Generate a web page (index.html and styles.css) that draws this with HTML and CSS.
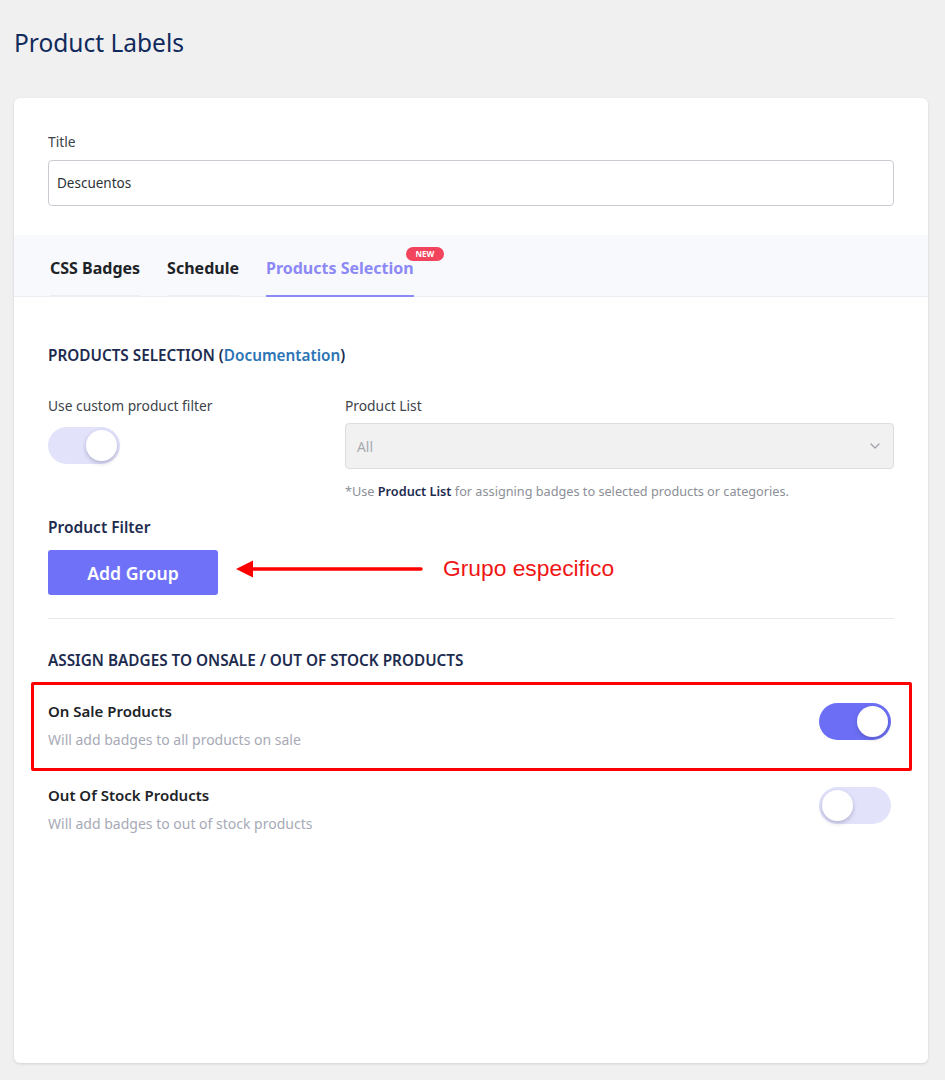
FILE: index.html
```html
<!DOCTYPE html>
<html lang="en">
<head>
    <meta charset="UTF-8">
    <title>Product Labels</title>
    <link rel="stylesheet" href="styles.css">
</head>
<body>
<h1 class="page-title">Product Labels</h1>

<!-- main settings card -->
<div class="card">
    <div class="title-field">
        <label class="field-label">Title</label>
        <div class="text-input">Descuentos</div>
    </div>

    <!-- tabs -->
    <div class="tabs">
        <a class="tab" href="javascript:;">CSS Badges</a>
        <a class="tab" href="javascript:;">Schedule</a>
        <a class="tab active" href="javascript:;">Products Selection<span class="new-badge">NEW</span></a>
    </div>

    <div class="panel">
        <h2 class="section-title">PRODUCTS SELECTION (<a href="javascript:;">Documentation</a>)</h2>

        <div class="filter-row">
            <div class="filter-col">
                <label class="field-label">Use custom product filter</label>
                <span class="switch switch-soft on"><span class="knob"></span></span>
            </div>
            <div class="filter-col">
                <label class="field-label">Product List</label>
                <div class="select-box">
                    <span>All</span>
                    <svg width="10" height="6" viewBox="0 0 10 6"><path d="M1 1l4 4 4-4" fill="none" stroke="#a0a3ab" stroke-width="1.3" stroke-linecap="round" stroke-linejoin="round"/></svg>
                </div>
                <p class="hint">*Use <b>Product List</b> for assigning badges to selected products or categories.</p>
            </div>
        </div>

        <h3 class="sub-title">Product Filter</h3>
        <div class="group-row">
            <button class="btn-primary">Add Group</button>
            <!-- annotation arrow -->
            <svg class="note-arrow" width="188" height="20" viewBox="0 0 188 20">
                <path d="M0 10L17 1.5V18.5Z" fill="#ff0000"/>
                <path d="M15 10H185" stroke="#ff0000" stroke-width="3.5" stroke-linecap="round"/>
            </svg>
            <span class="note-text">Grupo especifico</span>
        </div>

        <div class="divider"></div>

        <h2 class="section-title assign">ASSIGN BADGES TO ONSALE / OUT OF STOCK PRODUCTS</h2>

        <div class="option marked">
            <div class="option-text">
                <div class="option-name">On Sale Products</div>
                <div class="option-desc">Will add badges to all products on sale</div>
            </div>
            <span class="switch on"><span class="knob"></span></span>
        </div>

        <div class="option">
            <div class="option-text">
                <div class="option-name">Out Of Stock Products</div>
                <div class="option-desc">Will add badges to out of stock products</div>
            </div>
            <span class="switch switch-soft"><span class="knob"></span></span>
        </div>
    </div>
</div>
</body>
</html>
```

FILE: styles.css
```css
* {
    margin: 0;
    padding: 0;
    box-sizing: border-box;
}

body {
    background-color: #f0f0f0;
    font-family: "Noto Sans", "Open Sans", sans-serif;
    color: #1d2327;
}

.page-title {
    padding: 28px 14px 0;
    font-size: 24.5px;
    line-height: 30px;
    font-weight: 400;
    color: #102a5c;
}

/* card */
.card {
    margin: 40px 17px 17px 14px;
    height: 965px;
    background-color: #fff;
    border-radius: 6px;
    box-shadow: 0 1px 3px rgba(0, 0, 0, 0.12);
    padding-top: 35px;
}

.title-field {
    padding: 0 34px;
}

.field-label {
    display: block;
    font-size: 13.8px;
    line-height: 18px;
    color: #3c434a;
}

.text-input {
    margin-top: 9px;
    height: 46px;
    border: 1px solid #c9cbd2;
    border-radius: 4px;
    padding: 0 8px;
    font-size: 13.5px;
    line-height: 44px;
    color: #2c3338;
}

/* tabs */
.tabs {
    margin-top: 29px;
    display: flex;
    gap: 27px;
    padding: 0 36px;
    background-color: #f8f9fd;
    border-bottom: 1px solid #ebecf1;
}

.tab {
    position: relative;
    padding: 23px 0 17px;
    font-size: 16px;
    line-height: 20px;
    font-weight: 700;
    color: #1d2327;
    text-decoration: none;
    border-bottom: 2px solid #eceef4;
    margin-bottom: -1px;
}

.tab.active {
    color: #8c88f6;
    border-bottom-color: #8c88f6;
}

.new-badge {
    position: absolute;
    left: 140px;
    top: 12px;
    width: 38px;
    text-align: center;
    height: 14px;
    border-radius: 7px;
    background-color: #f2445c;
    color: #fff;
    font-size: 8px;
    line-height: 14px;
    font-weight: 700;
}

/* panel */
.panel {
    padding: 0 34px;
}

.section-title {
    margin-top: 48px;
    font-size: 15.3px;
    line-height: 20px;
    font-weight: 600;
    color: #1d2b4f;
}

.section-title a {
    color: #2b74b5;
    text-decoration: none;
}

.filter-row {
    margin-top: 32px;
    display: grid;
    grid-template-columns: 297px 1fr;
}

.switch {
    display: block;
    position: relative;
    width: 72px;
    height: 37px;
    border-radius: 19px;
    background-color: #6c6ff5;
}

.switch-soft {
    background-color: #e2e2fb;
}

.knob {
    position: absolute;
    top: 3px;
    left: 3px;
    width: 31px;
    height: 31px;
    border-radius: 50%;
    background-color: #fff;
    box-shadow: 0 2px 4px rgba(30, 30, 80, 0.25);
}

.switch.on .knob {
    left: 38px;
}

.filter-col .switch {
    margin-top: 12px;
}

.select-box {
    margin-top: 8px;
    height: 46px;
    background-color: #f1f1f2;
    border: 1px solid #dcdde1;
    border-radius: 4px;
    display: flex;
    align-items: center;
    justify-content: space-between;
    padding: 0 13px 0 11px;
    font-size: 13.8px;
    color: #a8aab0;
}

.hint {
    margin-top: 13px;
    font-size: 12.7px;
    line-height: 18px;
    color: #8c8f98;
}

.hint b {
    font-weight: 600;
    color: #1d2b4f;
}

.sub-title {
    margin-top: 18px;
    font-size: 15.5px;
    line-height: 18px;
    font-weight: 600;
    color: #1d2b4f;
}

.group-row {
    margin-top: 14px;
    display: flex;
    align-items: center;
}

.btn-primary {
    width: 170px;
    height: 45px;
    border: none;
    border-radius: 3px;
    background-color: #6f72f9;
    color: #fff;
    font-family: "Noto Sans", "Open Sans", sans-serif;
    font-size: 17.6px;
    font-weight: 600;
}

/* annotation sits a little above the button centre */
.note-arrow {
    margin-left: 18px;
    margin-bottom: 7px;
}

.note-text {
    margin-left: 19px;
    margin-bottom: 9px;
    font-family: "Liberation Sans", Arial, sans-serif;
    font-size: 22.8px;
    color: #f01515;
}

.divider {
    margin-top: 23px;
    height: 1px;
    background-color: #e8e8ea;
}

.section-title.assign {
    margin-top: 31px;
}

/* option rows */
.option {
    position: relative;
    display: flex;
    justify-content: space-between;
    align-items: flex-start;
    margin-top: 36px;
}

.option.marked {
    margin-top: 31px;
}

/* red annotation frame */
.option.marked::after {
    content: "";
    position: absolute;
    left: -17px;
    right: -18px;
    top: -19px;
    bottom: -22px;
    border: 3.5px solid #ff0000;
    border-radius: 2px;
}

.option-name {
    font-size: 15px;
    line-height: 20px;
    font-weight: 600;
    color: #1d2327;
}

.option-desc {
    margin-top: 10px;
    font-size: 14px;
    line-height: 18px;
    color: #a7aab6;
}

.option .switch {
    margin-top: 2px;
    margin-right: 3px;
}
```
